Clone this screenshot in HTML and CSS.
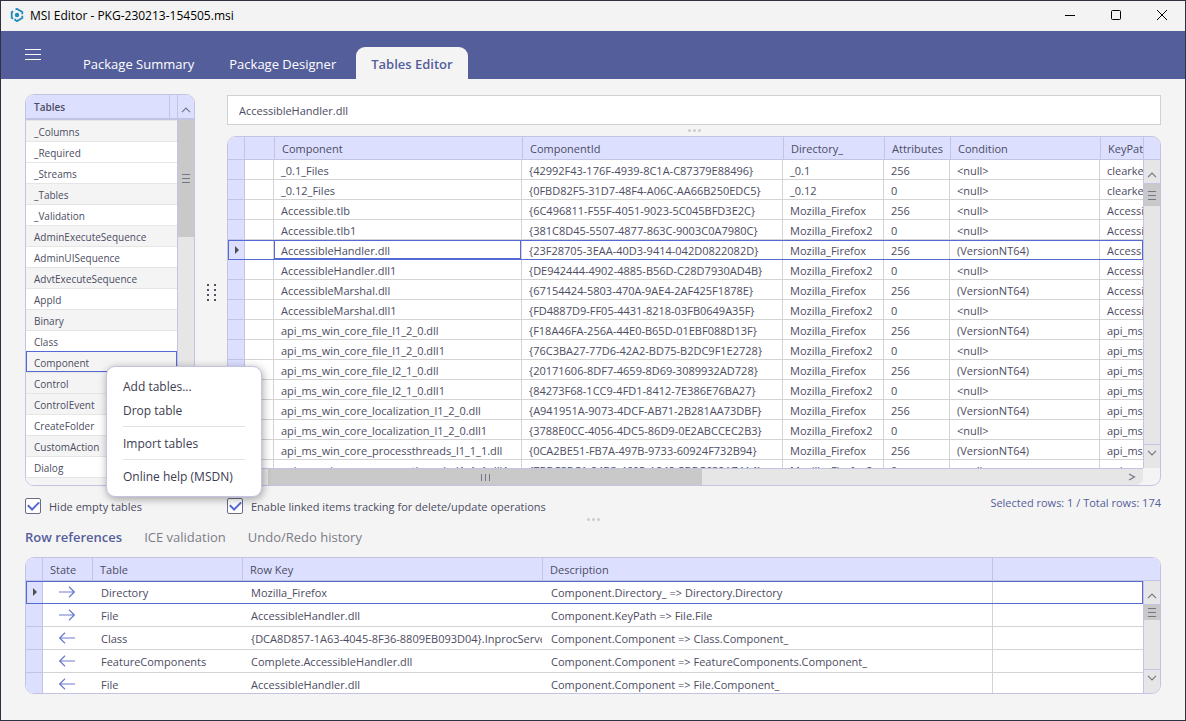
FILE: index.html
```html
<!DOCTYPE html>
<html lang="en">
<head>
    <meta charset="UTF-8">
    <meta name="viewport" content="width=device-width, initial-scale=1.0">
    <title>MSI Editor - PKG-230213-154505.msi</title>
    <link rel="stylesheet" href="styles.css">
</head>
<body>
    <svg class="sprite" aria-hidden="true">
        <symbol id="up" viewBox="0 0 10 6"><path d="M1 5.2 5 1.2 9 5.2" /></symbol>
        <symbol id="down" viewBox="0 0 10 6"><path d="M1 .8 5 4.8 9 .8" /></symbol>
        <symbol id="right" viewBox="0 0 8 8"><path d="M1 1 6.500 4 1 7" /></symbol>
        <symbol id="to" viewBox="0 0 16 12"><path d="M0 6H15.500M10 .8 15.300 6 10 11.200" /></symbol>
        <symbol id="from" viewBox="0 0 16 12"><path d="M16 6H.7M6 .8.7 6 6 11.200" /></symbol>
    </svg>

    <div class="window">
        <header class="titlebar">
            <svg class="logo" viewBox="0 0 14 14">
                <circle cx="7" cy="7" r="2.200" />
                <path d="M3.200 3.300 1.700 4.200V9.800L3.200 10.700M5.300 12.900V10.800M5.800 12.700 7 13.100 12.300 10V7.800M5.500 1.300 7 .9 12.300 4V6.200" />
            </svg>
            <h1>MSI Editor - PKG-230213-154505.msi</h1>
            <div class="window-buttons">
                <button aria-label="Minimize"><svg viewBox="0 0 10 10"><path d="M0 5.500H10" /></svg></button>
                <button aria-label="Maximize"><svg viewBox="0 0 10 10"><rect x=".5" y=".5" width="9" height="9" rx="1" /></svg></button>
                <button aria-label="Close"><svg viewBox="0 0 10 10"><path d="M0 0 10 10M10 0 0 10" /></svg></button>
            </div>
        </header>

        <nav class="navbar">
            <button class="burger" aria-label="Menu"><span></span><span></span><span></span></button>
            <a href="#" class="tab">Package Summary</a>
            <a href="#" class="tab">Package Designer</a>
            <a href="#" class="tab active">Tables Editor</a>
        </nav>

        <main class="content">
            <div class="editor">
                <section class="sidebar">
                    <div class="panel tables-panel">
                        <div class="view">
                            <table class="list">
                                <colgroup><col><col class="w-stub"></colgroup>
                                <thead><tr><th>Tables</th><th></th></tr></thead>
                                <tbody>
                                    <tr class="alt"><td colspan="2">_Columns</td></tr>
                                    <tr><td colspan="2">_Required</td></tr>
                                    <tr><td colspan="2">_Streams</td></tr>
                                    <tr class="alt"><td colspan="2">_Tables</td></tr>
                                    <tr><td colspan="2">_Validation</td></tr>
                                    <tr class="alt"><td colspan="2">AdminExecuteSequence</td></tr>
                                    <tr><td colspan="2">AdminUISequence</td></tr>
                                    <tr class="alt"><td colspan="2">AdvtExecuteSequence</td></tr>
                                    <tr><td colspan="2">AppId</td></tr>
                                    <tr class="alt"><td colspan="2">Binary</td></tr>
                                    <tr><td colspan="2">Class</td></tr>
                                    <tr class="alt selected"><td colspan="2">Component</td></tr>
                                    <tr class="alt"><td colspan="2">Control</td></tr>
                                    <tr class="alt"><td colspan="2">ControlEvent</td></tr>
                                    <tr><td colspan="2">CreateFolder</td></tr>
                                    <tr class="alt"><td colspan="2">CustomAction</td></tr>
                                    <tr><td colspan="2">Dialog</td></tr>
                                    <tr class="alt"><td colspan="2"></td></tr>
                                </tbody>
                            </table>
                        </div>
                        <div class="vscroll">
                            <button class="scroll-btn top" aria-label="Scroll up"><svg><use href="#up" /></svg></button>
                            <div class="thumb tall"><i class="grip"></i></div>
                        </div>
                    </div>
                    <label class="check"><input type="checkbox" checked>Hide empty tables</label>

                    <div class="context-menu" role="menu">
                        <button role="menuitem">Add tables...</button>
                        <button role="menuitem">Drop table</button>
                        <hr>
                        <button role="menuitem">Import tables</button>
                        <hr>
                        <button role="menuitem">Online help (MSDN)</button>
                    </div>
                </section>

                <div class="splitter-v"><i></i><i></i><i></i><i></i><i></i><i></i><i></i><i></i></div>

                <section class="details">
                    <input class="cell-value" type="text" aria-label="Cell value" value="AccessibleHandler.dll">
                    <div class="splitter-h"><i></i><i></i><i></i></div>

                    <div class="panel rows-panel">
                        <div class="view">
                            <table class="rows">
                                <colgroup>
                                    <col class="w-mark"><col class="w-blank"><col class="w-component"><col class="w-id"><col class="w-dir"><col class="w-attr"><col class="w-cond"><col>
                                </colgroup>
                                <thead>
                                    <tr><th></th><th></th><th>Component</th><th>ComponentId</th><th>Directory_</th><th>Attributes</th><th>Condition</th><th>KeyPath</th></tr>
                                </thead>
                                <tbody>
                                    <tr><td></td><td></td><td>_0.1_Files</td><td>{42992F43-176F-4939-8C1A-C87379E88496}</td><td>_0.1</td><td>256</td><td>&lt;null&gt;</td><td>clearkey</td></tr>
                                    <tr><td></td><td></td><td>_0.12_Files</td><td>{0FBD82F5-31D7-48F4-A06C-AA66B250EDC5}</td><td>_0.12</td><td>0</td><td>&lt;null&gt;</td><td>clearkey</td></tr>
                                    <tr><td></td><td></td><td>Accessible.tlb</td><td>{6C496811-F55F-4051-9023-5C045BFD3E2C}</td><td>Mozilla_Firefox</td><td>256</td><td>&lt;null&gt;</td><td>Accessible.tlb</td></tr>
                                    <tr><td></td><td></td><td>Accessible.tlb1</td><td>{381C8D45-5507-4877-863C-9003C0A7980C}</td><td>Mozilla_Firefox2</td><td>0</td><td>&lt;null&gt;</td><td>Accessible.tlb1</td></tr>
                                    <tr class="selected"><td></td><td></td><td class="focused">AccessibleHandler.dll</td><td>{23F28705-3EAA-40D3-9414-042D0822082D}</td><td>Mozilla_Firefox</td><td>256</td><td>(VersionNT64)</td><td>AccessibleHandler.dll</td></tr>
                                    <tr><td></td><td></td><td>AccessibleHandler.dll1</td><td>{DE942444-4902-4885-B56D-C28D7930AD4B}</td><td>Mozilla_Firefox2</td><td>0</td><td>&lt;null&gt;</td><td>AccessibleHandler.dll1</td></tr>
                                    <tr><td></td><td></td><td>AccessibleMarshal.dll</td><td>{67154424-5803-470A-9AE4-2AF425F1878E}</td><td>Mozilla_Firefox</td><td>256</td><td>(VersionNT64)</td><td>AccessibleMarshal.dll</td></tr>
                                    <tr><td></td><td></td><td>AccessibleMarshal.dll1</td><td>{FD4887D9-FF05-4431-8218-03FB0649A35F}</td><td>Mozilla_Firefox2</td><td>0</td><td>&lt;null&gt;</td><td>AccessibleMarshal.dll1</td></tr>
                                    <tr><td></td><td></td><td>api_ms_win_core_file_l1_2_0.dll</td><td>{F18A46FA-256A-44E0-B65D-01EBF088D13F}</td><td>Mozilla_Firefox</td><td>256</td><td>(VersionNT64)</td><td>api_ms_win</td></tr>
                                    <tr><td></td><td></td><td>api_ms_win_core_file_l1_2_0.dll1</td><td>{76C3BA27-77D6-42A2-BD75-B2DC9F1E2728}</td><td>Mozilla_Firefox2</td><td>0</td><td>&lt;null&gt;</td><td>api_ms_win</td></tr>
                                    <tr><td></td><td></td><td>api_ms_win_core_file_l2_1_0.dll</td><td>{20171606-8DF7-4659-8D69-3089932AD728}</td><td>Mozilla_Firefox</td><td>256</td><td>(VersionNT64)</td><td>api_ms_win</td></tr>
                                    <tr><td></td><td></td><td>api_ms_win_core_file_l2_1_0.dll1</td><td>{84273F68-1CC9-4FD1-8412-7E386E76BA27}</td><td>Mozilla_Firefox2</td><td>0</td><td>&lt;null&gt;</td><td>api_ms_win</td></tr>
                                    <tr><td></td><td></td><td>api_ms_win_core_localization_l1_2_0.dll</td><td>{A941951A-9073-4DCF-AB71-2B281AA73DBF}</td><td>Mozilla_Firefox</td><td>256</td><td>(VersionNT64)</td><td>api_ms_win</td></tr>
                                    <tr><td></td><td></td><td>api_ms_win_core_localization_l1_2_0.dll1</td><td>{3788E0CC-4056-4DC5-86D9-0E2ABCCEC2B3}</td><td>Mozilla_Firefox2</td><td>0</td><td>&lt;null&gt;</td><td>api_ms_win</td></tr>
                                    <tr><td></td><td></td><td>api_ms_win_core_processthreads_l1_1_1.dll</td><td>{0CA2BE51-FB7A-497B-9733-60924F732B94}</td><td>Mozilla_Firefox</td><td>256</td><td>(VersionNT64)</td><td>api_ms_win</td></tr>
                                    <tr><td></td><td></td><td>api_ms_win_core_processthreads_l1_1_1.dll1</td><td>{7BBC8BC1-84B3-4605-A848-5BBC639A74A4}</td><td>Mozilla_Firefox2</td><td>0</td><td>&lt;null&gt;</td><td>api_ms_win</td></tr>
                                </tbody>
                            </table>
                        </div>
                        <div class="vscroll">
                            <div class="scroll-head"></div>
                            <button class="scroll-btn up" aria-label="Scroll up"><svg><use href="#up" /></svg></button>
                            <div class="thumb medium"><i class="grip"></i></div>
                            <button class="scroll-btn down" aria-label="Scroll down"><svg><use href="#down" /></svg></button>
                        </div>
                        <div class="hscroll">
                            <div class="thumb wide"><i class="grip upright"></i></div>
                            <button class="scroll-btn next" aria-label="Scroll right"><svg><use href="#right" /></svg></button>
                        </div>
                    </div>

                    <div class="below">
                        <label class="check"><input type="checkbox" checked>Enable linked items tracking for delete/update operations</label>
                        <span class="status">Selected rows: 1 / Total rows: 174</span>
                    </div>
                </section>
            </div>

            <div class="splitter-h"><i></i><i></i><i></i></div>

            <div class="subtabs">
                <a href="#" class="active">Row references</a>
                <a href="#">ICE validation</a>
                <a href="#">Undo/Redo history</a>
            </div>

            <div class="panel refs-panel">
                <table class="refs refs-head">
                    <colgroup><col class="w-mark"><col class="w-state"><col class="w-table"><col class="w-key"><col class="w-desc"><col></colgroup>
                    <thead><tr><th></th><th>State</th><th>Table</th><th>Row Key</th><th>Description</th><th></th></tr></thead>
                </table>
                <div class="view">
                    <table class="refs">
                        <colgroup><col class="w-mark"><col class="w-state"><col class="w-table"><col class="w-key"><col class="w-desc"><col></colgroup>
                        <tbody>
                            <tr class="selected"><td></td><td><svg class="arrow"><use href="#to" /></svg></td><td>Directory</td><td>Mozilla_Firefox</td><td>Component.Directory_ =&gt; Directory.Directory</td><td></td></tr>
                            <tr><td></td><td><svg class="arrow"><use href="#to" /></svg></td><td>File</td><td>AccessibleHandler.dll</td><td>Component.KeyPath =&gt; File.File</td><td></td></tr>
                            <tr><td></td><td><svg class="arrow"><use href="#from" /></svg></td><td>Class</td><td>{DCA8D857-1A63-4045-8F36-8809EB093D04}.InprocServer32</td><td>Component.Component =&gt; Class.Component_</td><td></td></tr>
                            <tr><td></td><td><svg class="arrow"><use href="#from" /></svg></td><td>FeatureComponents</td><td>Complete.AccessibleHandler.dll</td><td>Component.Component =&gt; FeatureComponents.Component_</td><td></td></tr>
                            <tr><td></td><td><svg class="arrow"><use href="#from" /></svg></td><td>File</td><td>AccessibleHandler.dll</td><td>Component.Component =&gt; File.Component_</td><td></td></tr>
                        </tbody>
                    </table>
                </div>
                <div class="vscroll">
                    <button class="scroll-btn up" aria-label="Scroll up"><svg><use href="#up" /></svg></button>
                    <div class="thumb small"><i class="grip"></i></div>
                    <button class="scroll-btn down" aria-label="Scroll down"><svg><use href="#down" /></svg></button>
                </div>
            </div>
        </main>
    </div>
</body>
</html>
```

FILE: styles.css
```css
* {
    box-sizing: border-box;
}

body {
    font-family: 'Open Sans', 'Noto Sans', sans-serif;
    font-size: 11px;
    margin: 0;
    color: #4c4c62;
}

button {
    font: inherit;
    color: inherit;
    background: none;
    border: none;
    padding: 0;
}

a {
    text-decoration: none;
}

.sprite {
    display: none;
}

.window {
    display: flex;
    flex-direction: column;
    height: 100vh;
    background-color: #f4f4f4;
    border: 1px solid #2f3042;
}

/* title bar */
.titlebar {
    display: flex;
    align-items: center;
    height: 30px;
    flex: none;
    padding: 0 0 2px 9px;
    background-color: #f3f3f3;
}

.logo {
    width: 14px;
    height: 14px;
    fill: #1f8bb8;
}

.logo path {
    fill: none;
    stroke: #1f8bb8;
    stroke-width: 1.8;
}

.titlebar h1 {
    flex: 1;
    margin: 0 0 0 6px;
    font-size: 12px;
    font-weight: 400;
    color: #000;
}

.window-buttons {
    display: flex;
}

.window-buttons button {
    display: grid;
    place-items: center;
    width: 46px;
    height: 28px;
}

.window-buttons svg {
    width: 10px;
    height: 10px;
    fill: none;
    stroke: #000;
    overflow: visible;
}

/* navigation */
.navbar {
    display: flex;
    align-items: flex-end;
    gap: 5px;
    height: 48px;
    flex: none;
    padding-left: 24px;
    background-color: #545e9b;
}

.burger {
    display: flex;
    flex-direction: column;
    gap: 4px;
    width: 16px;
    margin: 0 22px 19px 0;
}

.burger span {
    height: 1px;
    background-color: #fff;
}

.tab {
    padding: 2px 15px 0;
    border-radius: 9px 9px 0 0;
    font-size: 13px;
    line-height: 30px;
    color: #fff;
}

.tab.active {
    background-color: #f4f4f4;
    font-weight: 600;
    color: #545e9b;
}

/* layout */
.content {
    display: flex;
    flex-direction: column;
    flex: 1;
    min-height: 0;
    padding: 15px 24px 26px;
}

.editor {
    display: flex;
    flex: 1;
    min-height: 0;
}

.sidebar {
    position: relative;
    display: flex;
    flex-direction: column;
    gap: 12px;
    width: 170px;
    flex: none;
}

.details {
    display: flex;
    flex-direction: column;
    flex: 1;
    min-width: 0;
    padding-top: 1px;
}

.splitter-v {
    display: grid;
    grid-template-columns: 2px 2px;
    gap: 3px 5px;
    place-content: center;
    width: 32px;
    padding-bottom: 24px;
}

.splitter-v i {
    height: 2px;
    background-color: #505064;
}

.splitter-h {
    display: flex;
    justify-content: center;
    align-items: center;
    gap: 2px;
    height: 11px;
    flex: none;
}

.splitter-h i {
    width: 3px;
    height: 3px;
    border-radius: 50%;
    background-color: #cdcdcd;
}

.cell-value {
    height: 30px;
    flex: none;
    padding: 1px 11px 0;
    border: 1px solid #d0d0d0;
    background-color: #fff;
    font: inherit;
    color: inherit;
}

/* panels and tables */
.panel {
    display: grid;
    grid-template-columns: minmax(0, 1fr) 17px;
    flex: 1;
    min-height: 0;
    overflow: hidden;
    border: 1px solid #c3c3e3;
    border-radius: 9px;
}

.view {
    min-height: 0;
    overflow: hidden;
}

.rows-panel {
    grid-template-rows: minmax(0, 1fr) 17px;
}

.refs-panel {
    grid-template-rows: 23px minmax(0, 1fr);
    flex: none;
    height: 137px;
}

.refs-head {
    grid-column: 1 / 3;
}

table {
    width: 100%;
    table-layout: fixed;
    border-collapse: separate;
    border-spacing: 0;
    background-color: #fff;
}

th,
td {
    overflow: hidden;
    padding: 0 0 0 7px;
    text-align: left;
    white-space: nowrap;
}

th {
    height: 23px;
    border-left: 1px solid #c3c3e3;
    border-bottom: 1px solid #c3c3e3;
    background-color: #dddfff;
    font-size: 11px;
    font-weight: 500;
}

th:first-child {
    border-left: none;
}

.w-stub { width: 8px; }
.w-mark { width: 16px; }
.w-blank { width: 30px; }
.w-component { width: 248px; }
.w-id { width: 261px; }
.w-dir { width: 101px; }
.w-attr { width: 66px; }
.w-cond { width: 150px; }
.w-state { width: 50px; }
.w-table { width: 150px; }
.w-key { width: 300px; }
.w-desc { width: 450px; }

.list th {
    height: 25px;
    border-bottom-width: 2px;
    font-size: 10px;
    font-weight: 600;
}

.list th,
.list td {
    padding-left: 8px;
}

.list td {
    height: 21px;
    padding-top: 1px;
    border-top: 1px solid #e6e6e6;
    font-size: 10px;
}

.list .alt {
    background-color: #f4f4f4;
}

.selected {
    outline: 1px solid #5469d4;
    outline-offset: -1px;
}

.rows td {
    height: 20px;
    padding-top: 2px;
    border-right: 1px solid #d3d3d3;
    border-bottom: 1px solid #d3d3d3;
}

.rows td:nth-child(2) {
    border-left: 1px solid #c3c3e3;
}

.rows td:last-child {
    border-right: none;
}

.rows td:first-child,
.refs td:first-child {
    padding: 0;
    border-right: none;
    border-bottom-color: #c3c3e3;
    background-color: #dddfff;
}

.rows .selected td:first-child::before,
.refs .selected td:first-child::before {
    content: '';
    display: block;
    width: 0;
    margin-left: 7px;
    border: 4px solid transparent;
    border-left-color: #505050;
    border-right: none;
}

.rows .focused {
    box-shadow: inset 0 0 0 1px #5469d4;
}

.refs td {
    height: 23px;
    padding-left: 9px;
    border-bottom: 1px solid #d3d3d3;
}

.refs td:nth-child(2) {
    border-left: 1px solid #c3c3e3;
    padding: 0 0 0 16px;
}

.refs td:last-child {
    border-left: 1px solid #d3d3d3;
}

.arrow {
    display: block;
    width: 16px;
    height: 12px;
    fill: none;
    stroke: #6b7bd0;
    stroke-width: 1.2;
}

/* scroll bars */
.vscroll {
    display: flex;
    flex-direction: column;
    min-height: 0;
    border-left: 1px solid #c3c3e3;
    background-color: #e6e6e6;
}

.hscroll {
    display: flex;
    padding-left: 40px;
    border-top: 1px solid #c3c3e3;
    border-radius: 0 0 7px 0;
    background-color: #e6e6e6;
}

.scroll-btn {
    display: grid;
    place-items: center;
    flex: none;
}

.scroll-btn svg {
    width: 10px;
    height: 6px;
    fill: none;
    stroke: #75758a;
    stroke-width: 1.2;
}

.scroll-btn.up {
    height: 24px;
    padding-top: 6px;
    border-bottom: 1px solid #c3c3e3;
}

.scroll-btn.top {
    height: 25px;
    padding-top: 6px;
    border-bottom: 2px solid #c3c3e3;
    background-color: #dddfff;
}

.scroll-btn.down {
    height: 24px;
    margin-top: auto;
    padding-bottom: 7px;
    border-top: 1px solid #c3c3e3;
}

.scroll-btn.next {
    margin-left: auto;
    padding-right: 7px;
}

.scroll-btn.next svg {
    width: 8px;
    height: 8px;
}

.scroll-head {
    height: 23px;
    flex: none;
    border-bottom: 1px solid #c3c3e3;
    background-color: #dddfff;
}

.thumb {
    display: grid;
    place-items: center;
    flex: none;
    background-color: #c9c9c9;
}

.thumb.tall { height: 117px; }
.thumb.medium { height: 22px; }
.thumb.small { height: 15px; }
.thumb.wide { width: 434px; }

.grip {
    width: 8px;
    height: 9px;
    background: repeating-linear-gradient(#75758a 0 1px, transparent 1px 4px);
}

.grip.upright {
    width: 9px;
    height: 7px;
    background: repeating-linear-gradient(to right, #75758a 0 1px, transparent 1px 4px);
}

/* checkboxes and status */
.check {
    display: flex;
    align-items: center;
    gap: 8px;
    height: 16px;
    flex: none;
}

.check input {
    appearance: none;
    display: grid;
    place-items: center;
    width: 16px;
    height: 16px;
    margin: 0;
    border: 1px solid #6c6c84;
    border-radius: 2px;
    background-color: #fff;
}

.check input:checked::before {
    content: '';
    width: 9px;
    height: 5px;
    margin-bottom: 3px;
    border: solid #5469d4;
    border-width: 0 0 2px 2px;
    transform: rotate(-45deg);
}

.below {
    display: flex;
    justify-content: space-between;
    margin-top: 12px;
}

.status {
    line-height: 10px;
    color: #545e9b;
}

.subtabs {
    display: flex;
    gap: 22px;
    height: 32px;
    flex: none;
    font-size: 13px;
    line-height: 25px;
}

.subtabs a {
    color: #7c7c88;
}

.subtabs .active {
    font-weight: 600;
    color: #545e9b;
}

/* context menu */
.context-menu {
    position: absolute;
    left: 81px;
    top: 272px;
    z-index: 1;
    display: flex;
    flex-direction: column;
    width: 156px;
    padding: 7px 16px 8px;
    border: 1px solid #c3c3e3;
    border-radius: 9px;
    background-color: #fff;
    box-shadow: 1px 2px 9px rgba(0, 0, 0, 0.35);
    font-size: 12px;
    color: #3c3c50;
}

.context-menu button {
    height: 24px;
    text-align: left;
    white-space: nowrap;
}

.context-menu hr {
    width: 100%;
    margin: 4px 0;
    border: none;
    border-top: 1px solid #e2e2e2;
}
```
